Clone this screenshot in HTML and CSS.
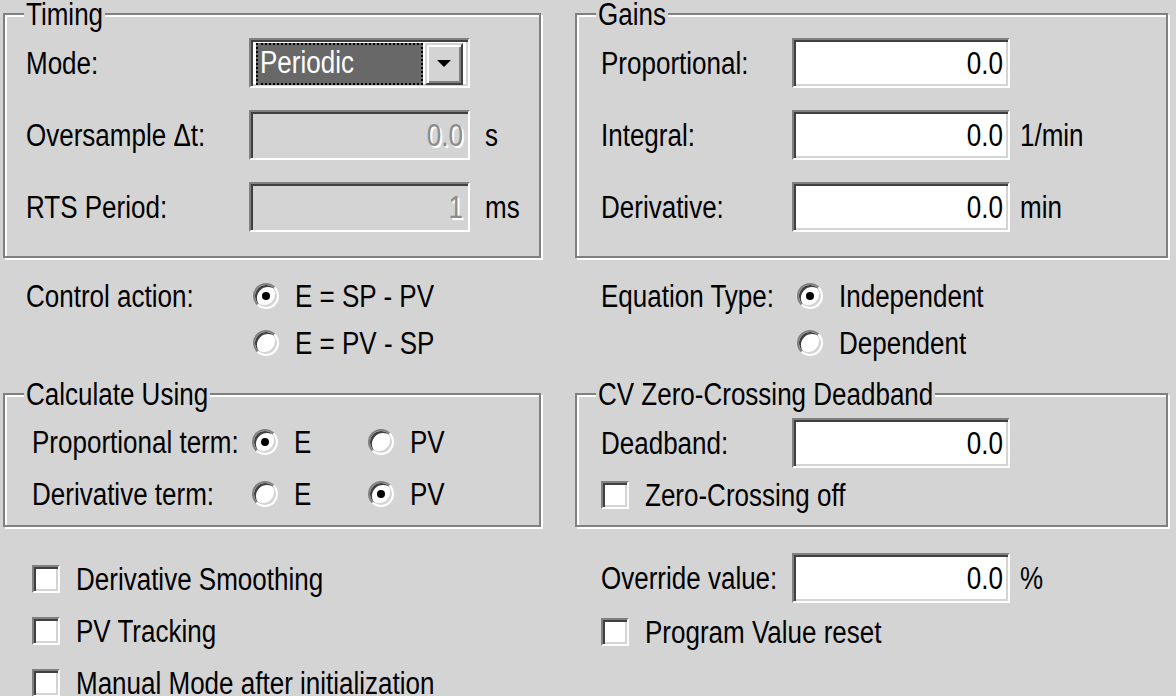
FILE: index.html
```html
<!DOCTYPE html>
<html lang="en">
<head>
<meta charset="utf-8">
<title>PID Configuration</title>
<link rel="stylesheet" href="styles.css">
</head>
<body>
<div class="dialog">

  <fieldset class="group timing">
    <legend><span class="t">Timing</span></legend>
    <div class="form-rows">
      <div class="form-row">
        <span class="label t">Mode:</span>
        <div class="combo">
          <div class="combo-value"><span class="t">Periodic</span></div>
          <div class="combo-btn">
            <svg width="14" height="8" viewBox="0 0 14 8"><path d="M0 0H14L7 7Z" fill="#000"/></svg>
          </div>
        </div>
      </div>
      <div class="form-row">
        <span class="label t">Oversample Δt:</span>
        <div class="edit disabled"><span class="t">0.0</span></div>
        <span class="unit t">s</span>
      </div>
      <div class="form-row">
        <span class="label t">RTS Period:</span>
        <div class="edit disabled"><span class="t">1</span></div>
        <span class="unit t">ms</span>
      </div>
    </div>
  </fieldset>

  <fieldset class="group gains">
    <legend><span class="t">Gains</span></legend>
    <div class="form-rows">
      <div class="form-row">
        <span class="label t">Proportional:</span>
        <div class="edit"><span class="t">0.0</span></div>
      </div>
      <div class="form-row">
        <span class="label t">Integral:</span>
        <div class="edit"><span class="t">0.0</span></div>
        <span class="unit t">1/min</span>
      </div>
      <div class="form-row">
        <span class="label t">Derivative:</span>
        <div class="edit"><span class="t">0.0</span></div>
        <span class="unit t">min</span>
      </div>
    </div>
  </fieldset>

  <div class="choice control-action">
    <span class="label t">Control action:</span>
    <div class="options">
      <div class="option"><span class="radio checked"></span><span class="t">E = SP - PV</span></div>
      <div class="option"><span class="radio"></span><span class="t">E = PV - SP</span></div>
    </div>
  </div>

  <div class="choice equation-type">
    <span class="label t">Equation Type:</span>
    <div class="options">
      <div class="option"><span class="radio checked"></span><span class="t">Independent</span></div>
      <div class="option"><span class="radio"></span><span class="t">Dependent</span></div>
    </div>
  </div>

  <fieldset class="group calc">
    <legend><span class="t">Calculate Using</span></legend>
    <div class="calc-rows">
      <div class="calc-row">
        <span class="label t">Proportional term:</span>
        <div class="option"><span class="radio checked"></span><span class="t">E</span></div>
        <div class="option"><span class="radio"></span><span class="t">PV</span></div>
      </div>
      <div class="calc-row">
        <span class="label t">Derivative term:</span>
        <div class="option"><span class="radio"></span><span class="t">E</span></div>
        <div class="option"><span class="radio checked"></span><span class="t">PV</span></div>
      </div>
    </div>
  </fieldset>

  <fieldset class="group deadband">
    <legend><span class="t">CV Zero-Crossing Deadband</span></legend>
    <div class="deadband-body">
      <div class="form-row">
        <span class="label t">Deadband:</span>
        <div class="edit"><span class="t">0.0</span></div>
      </div>
      <div class="check-row"><span class="checkbox"></span><span class="t">Zero-Crossing off</span></div>
    </div>
  </fieldset>

  <div class="checks">
    <div class="check-row"><span class="checkbox"></span><span class="t">Derivative Smoothing</span></div>
    <div class="check-row"><span class="checkbox"></span><span class="t">PV Tracking</span></div>
    <div class="check-row"><span class="checkbox"></span><span class="t">Manual Mode after initialization</span></div>
  </div>

  <div class="override">
    <div class="form-row">
      <span class="label t">Override value:</span>
      <div class="edit"><span class="t">0.0</span></div>
      <span class="unit t">%</span>
    </div>
    <div class="check-row"><span class="checkbox"></span><span class="t">Program Value reset</span></div>
  </div>

</div>
</body>
</html>
```

FILE: styles.css
```css
html, body {
  margin: 0;
  padding: 0;
}

body {
  width: 1176px;
  height: 696px;
  overflow: hidden;
  background: #d4d4d4;
  color: #000;
  font-family: "Liberation Sans", Arial, sans-serif;
  font-size: 26px;
  line-height: 28px;
}

/* tall, narrow dialog lettering (scaled bitmap font look) */
.t {
  display: inline-block;
  transform: scaleY(1.2);
  white-space: nowrap;
}

.dialog {
  display: grid;
  grid-template-columns: 538px 593px;
  grid-template-rows: 258px 122px 147px auto;
  column-gap: 34px;
  padding-left: 3px;
}

/* ---------- group boxes ---------- */
.group {
  margin: 0;
  padding: 0;
  min-width: 0;
  box-sizing: border-box;
  border: 2px solid #808080;
  box-shadow: inset 2px 2px 0 #fff, 2px 2px 0 #fff;
}

.group legend {
  margin-left: 19px;
  padding: 0 2px;
  background: #d4d4d4;
  height: 28px;
  line-height: 28px;
}

.timing, .gains { height: 258px; }
.calc, .deadband { height: 147px; }

/* ---------- form rows ---------- */
.form-rows {
  display: flex;
  flex-direction: column;
  gap: 22px;
  padding-top: 10px;
}

.timing .form-rows { padding-left: 21px; }
.gains .form-rows { padding-left: 24px; }

.form-row {
  display: grid;
  align-items: center;
  height: 50px;
}

.timing .form-row { grid-template-columns: 223px 221px auto; }
.timing .unit { margin-left: 15px; }

.gains .form-row,
.deadband .form-row,
.override .form-row { grid-template-columns: 191px 218px auto; }
.gains .unit, .override .unit { margin-left: 10px; }

.label { white-space: nowrap; }

/* ---------- sunken edit field ---------- */
.edit, .combo {
  box-sizing: border-box;
  height: 50px;
  border: 2px solid;
  border-color: #808080 #fff #fff #808080;
  box-shadow: inset 2px 2px 0 #404040, inset -2px -2px 0 #d4d4d4;
}

.edit {
  background: #fff;
  text-align: right;
  padding: 9px 5px 0 6px;
  white-space: nowrap;
}

.edit.disabled {
  background: #d4d4d4;
  color: #8c8c8c;
  text-shadow: 2px 2px 0 #fff;
}

/* ---------- combo box ---------- */
.combo {
  background: #fff;
  display: flex;
  gap: 2px;
  padding: 3px 1px 1px 5px;
}

.combo-value {
  width: 167px;
  box-sizing: border-box;
  background: #686868;
  color: #fff;
  border: 2px dotted #000;
  padding: 3px 0 0 2px;
}

.combo-btn {
  width: 38px;
  box-sizing: border-box;
  background: #d4d4d4;
  border: 2px solid;
  border-color: #d4d4d4 #404040 #404040 #d4d4d4;
  box-shadow: inset 2px 2px 0 #fff, inset -2px -2px 0 #808080;
  display: flex;
  align-items: center;
  justify-content: center;
}

/* ---------- radio buttons ---------- */
.option {
  display: flex;
  align-items: center;
  gap: 16px;
  height: 36px;
  white-space: nowrap;
}

.radio {
  width: 26px;
  height: 26px;
  flex: none;
  box-sizing: border-box;
  border-radius: 50%;
  border: 2px solid;
  border-color: #808080 #fff #fff #808080;
  background: #fff;
  box-shadow: inset 2px 2px 0 #404040, inset -2px -2px 0 #d4d4d4;
  display: grid;
  place-items: center;
}

.radio.checked::after {
  content: "";
  width: 8px;
  height: 8px;
  border-radius: 50%;
  background: #000;
}

/* ---------- checkboxes ---------- */
.check-row {
  display: flex;
  align-items: center;
  gap: 16px;
  height: 36px;
  white-space: nowrap;
}

.checkbox {
  width: 28px;
  height: 28px;
  flex: none;
  box-sizing: border-box;
  border: 2px solid;
  border-color: #808080 #fff #fff #808080;
  background: #fff;
  box-shadow: inset 2px 2px 0 #404040, inset -2px -2px 0 #d4d4d4;
}

/* ---------- choice rows (control action / equation type) ---------- */
.choice {
  display: grid;
  align-items: start;
  padding-top: 20px;
}

.control-action {
  grid-template-columns: 227px auto;
  padding-left: 23px;
}

.equation-type {
  grid-template-columns: 196px auto;
  padding-left: 26px;
}

.choice .label {
  height: 36px;
  line-height: 36px;
}

.choice .options {
  display: flex;
  flex-direction: column;
  gap: 11px;
}

/* ---------- calculate using ---------- */
.calc-rows {
  display: flex;
  flex-direction: column;
  gap: 16px;
  padding: 16px 0 0 27px;
}

.calc-row {
  display: grid;
  grid-template-columns: 220px 116px auto;
  align-items: center;
}

/* ---------- deadband ---------- */
.deadband-body {
  display: flex;
  flex-direction: column;
  gap: 9px;
  padding: 10px 0 0 24px;
}

/* ---------- bottom area ---------- */
.checks {
  display: flex;
  flex-direction: column;
  gap: 16px;
  padding: 34px 0 0 29px;
}

.override {
  display: flex;
  flex-direction: column;
  gap: 11px;
  padding: 26px 0 0 26px;
}
```
